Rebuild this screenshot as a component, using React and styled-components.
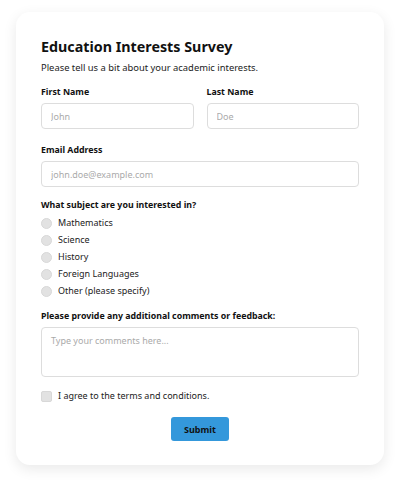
import React from "react";
import styled, { createGlobalStyle } from "styled-components";

const GlobalStyle = createGlobalStyle`
  * { box-sizing: border-box; }
  body {
    margin: 0;
    background: #fff;
    font-family: "Noto Sans", "Open Sans", sans-serif;
    color: #222;
  }
`;

const Page = styled.div`
  padding: 12px 16px 20px;
`;

const Card = styled.form`
  background: #fff;
  border-radius: 14px;
  box-shadow: 0 4px 14px rgba(0, 0, 0, 0.09);
  padding: 24px 25px 24px;
  display: flex;
  flex-direction: column;
`;

const Title = styled.h1`
  margin: 0;
  font-size: 14.3px;
  font-weight: 700;
  line-height: 22px;
  color: #111;
`;

const Subtitle = styled.p`
  margin: 3px 0 11px;
  font-size: 9.4px;
  line-height: 14px;
`;

const Row = styled.div`
  display: grid;
  grid-template-columns: 1fr 1fr;
  gap: 13px;
  margin-bottom: 3px;
`;

const Field = styled.div`
  display: flex;
  flex-direction: column;
  min-width: 0;
  margin-bottom: 12px;
`;

const Label = styled.label`
  font-size: 8.8px;
  font-weight: 700;
  line-height: 12px;
  margin-bottom: 5px;
  color: #111;
`;

const Input = styled.input`
  width: 100%;
  min-width: 0;
  height: 26px;
  border: 1px solid #ddd;
  border-radius: 4px;
  padding: 0 9px;
  font-family: inherit;
  font-size: 9px;
  color: #222;
  outline: none;
  &::placeholder { color: #aaa; }
`;

const TextArea = styled.textarea`
  width: 100%;
  height: 50px;
  border: 1px solid #ddd;
  border-radius: 4px;
  padding: 6px 9px;
  font-family: inherit;
  font-size: 9px;
  resize: none;
  outline: none;
  &::placeholder { color: #aaa; }
`;

const Options = styled.div`
  display: flex;
  flex-direction: column;
  gap: 3px;
`;

const Option = styled.label`
  display: flex;
  align-items: center;
  gap: 6px;
  font-size: 9px;
  line-height: 14px;
`;

const Radio = styled.span`
  width: 11px;
  height: 11px;
  border-radius: 50%;
  background: #e2e2e2;
  border: 1px solid #d8d8d8;
`;

const Check = styled.span`
  width: 11px;
  height: 11px;
  border-radius: 2px;
  background: #e2e2e2;
  border: 1px solid #d8d8d8;
`;

const Submit = styled.button`
  align-self: center;
  margin-top: 14px;
  width: 58px;
  height: 24px;
  border: none;
  border-radius: 3px;
  background: #3498db;
  color: #111;
  font-family: inherit;
  font-size: 9px;
  font-weight: 700;
`;

const subjects = [
  "Mathematics",
  "Science",
  "History",
  "Foreign Languages",
  "Other (please specify)",
];

export default function App() {
  return (
    <Page>
      <GlobalStyle />
      <Card onSubmit={(e) => e.preventDefault()}>
        <Title>Education Interests Survey</Title>
        <Subtitle>Please tell us a bit about your academic interests.</Subtitle>
        <Row>
          <Field>
            <Label>First Name</Label>
            <Input placeholder="John" />
          </Field>
          <Field>
            <Label>Last Name</Label>
            <Input placeholder="Doe" />
          </Field>
        </Row>
        <Field>
          <Label>Email Address</Label>
          <Input placeholder="john.doe@example.com" />
        </Field>
        <Field>
          <Label>What subject are you interested in?</Label>
          <Options>
            {subjects.map((s) => (
              <Option key={s}>
                <Radio />
                {s}
              </Option>
            ))}
          </Options>
        </Field>
        <Field>
          <Label>Please provide any additional comments or feedback:</Label>
          <TextArea placeholder="Type your comments here..." />
        </Field>
        <Option>
          <Check />I agree to the terms and conditions.
        </Option>
        <Submit type="submit">Submit</Submit>
      </Card>
    </Page>
  );
}
